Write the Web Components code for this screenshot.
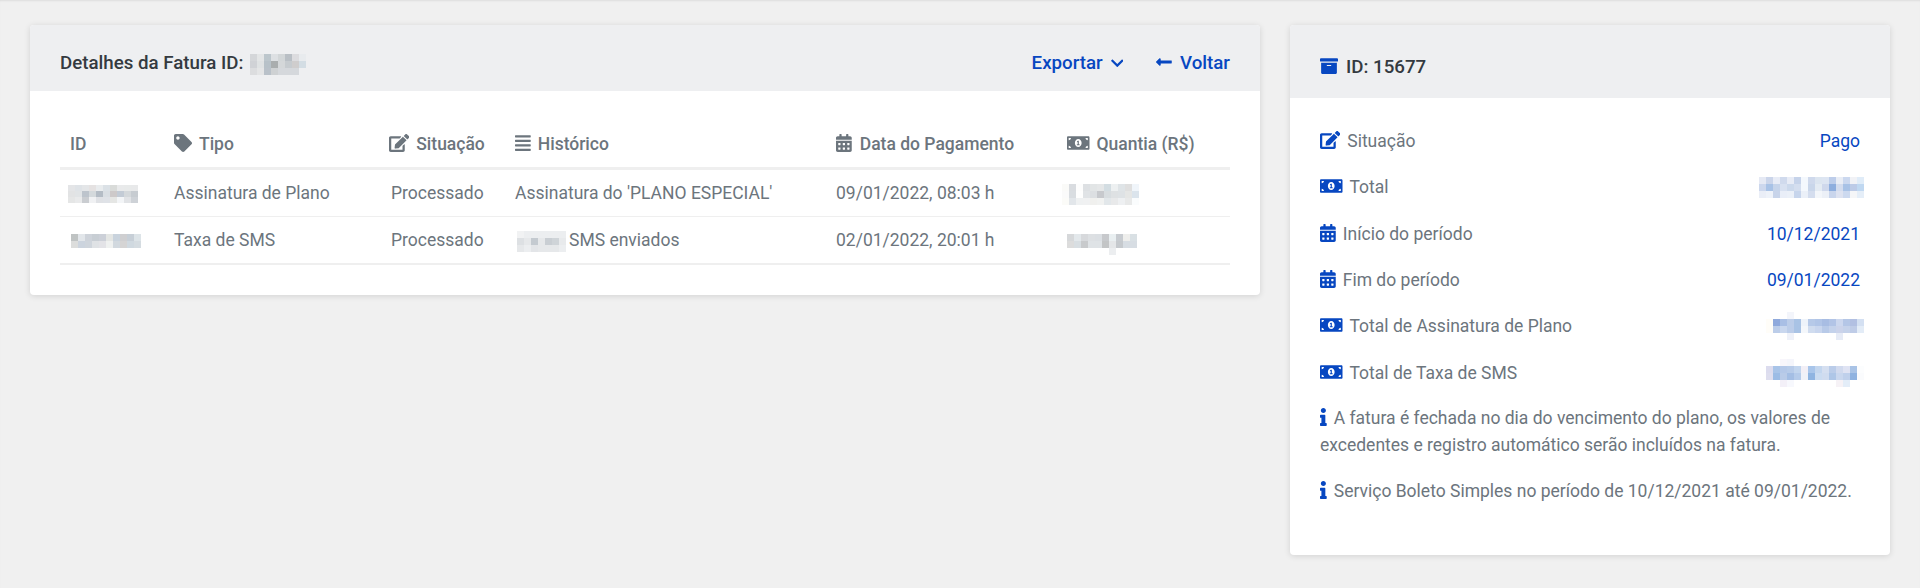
<!DOCTYPE html>
<html lang="pt-BR">
<head>
<meta charset="utf-8">
<title>Detalhes da Fatura</title>
<style>
html,body{margin:0;padding:0;background:#f0f0f0;height:100%;overflow:hidden;font-family:Roboto,"Liberation Sans",sans-serif;font-size:17.5px;color:#6c757d}
</style>
</head>
<body>
<invoice-page>
  <invoice-card slot="main">
    <span slot="title">Detalhes da Fatura ID: <blur-patch rh="7" style="margin-left:2px" colors="d4d6d9 e3e5e6 bcc6cc dde0e3 d2d6d8 b9bfc5 dcdcdf e8ebee|d0d2d6 dfe2e3 b7c1c8 a9adae d4d7d9 c6cbcf cfcdcd d3dde4|dcdddf e4e5e6 b9c1c9 ced1d3 d5d8dc d5d8dc d5d8dc eeeff1"></blur-patch></span>
    <div slot="actions" class="actions">
      <action-link label="Exportar" icon="chevron" after></action-link>
      <action-link label="Voltar" icon="arrow"></action-link>
    </div>
    <invoice-table></invoice-table>
  </invoice-card>
  <invoice-card slot="side" tall>
    <span slot="title"><fa-icon name="archive" color="#0747c1" gap="8"></fa-icon>ID: 15677</span>
    <invoice-summary></invoice-summary>
  </invoice-card>
</invoice-page>
<script>
const ICONS={
tag:[512,"M0 252.118V48C0 21.49 21.49 0 48 0h204.118a48 48 0 0 1 33.941 14.059l211.882 211.882c18.745 18.745 18.745 49.137 0 67.882L293.823 497.941c-18.745 18.745-49.137 18.745-67.882 0L14.059 286.059A48 48 0 0 1 0 252.118zM112 64c-26.51 0-48 21.49-48 48s21.49 48 48 48 48-21.49 48-48-21.49-48-48-48z"],
edit:[576,"M402.6 83.2l90.2 90.2c3.8 3.8 3.8 10 0 13.8L274.4 405.6l-92.8 10.3c-12.4 1.4-22.9-9.1-21.5-21.5l10.3-92.8L388.8 83.2c3.8-3.8 10-3.8 13.8 0zm162-22.9l-48.8-48.8c-15.2-15.2-39.9-15.2-55.2 0l-35.4 35.4c-3.8 3.8-3.8 10 0 13.8l90.2 90.2c3.8 3.8 10 3.8 13.8 0l35.4-35.4c15.2-15.3 15.2-40 0-55.2zM384 346.2V448H64V128h229.8c3.2 0 6.2-1.3 8.5-3.5l40-40c7.6-7.6 2.2-20.5-8.5-20.5H48C21.5 64 0 85.5 0 112v352c0 26.5 21.5 48 48 48h352c26.5 0 48-21.5 48-48V306.2c0-10.7-12.9-16-20.5-8.5l-40 40c-2.2 2.3-3.5 5.3-3.5 8.5z"],
justify:[448,"M432 416H16a16 16 0 0 0-16 16v32a16 16 0 0 0 16 16h416a16 16 0 0 0 16-16v-32a16 16 0 0 0-16-16zm0-128H16a16 16 0 0 0-16 16v32a16 16 0 0 0 16 16h416a16 16 0 0 0 16-16v-32a16 16 0 0 0-16-16zm0-128H16a16 16 0 0 0-16 16v32a16 16 0 0 0 16 16h416a16 16 0 0 0 16-16v-32a16 16 0 0 0-16-16zm0-128H16A16 16 0 0 0 0 48v32a16 16 0 0 0 16 16h416a16 16 0 0 0 16-16V48a16 16 0 0 0-16-16z"],
calendar:[448,"M0 464c0 26.5 21.5 48 48 48h352c26.5 0 48-21.5 48-48V192H0v272zm320-196c0-6.6 5.4-12 12-12h40c6.6 0 12 5.4 12 12v40c0 6.6-5.4 12-12 12h-40c-6.6 0-12-5.4-12-12v-40zm0 128c0-6.6 5.4-12 12-12h40c6.6 0 12 5.4 12 12v40c0 6.6-5.4 12-12 12h-40c-6.6 0-12-5.4-12-12v-40zM192 268c0-6.6 5.4-12 12-12h40c6.6 0 12 5.4 12 12v40c0 6.6-5.4 12-12 12h-40c-6.6 0-12-5.4-12-12v-40zm0 128c0-6.6 5.4-12 12-12h40c6.6 0 12 5.4 12 12v40c0 6.6-5.4 12-12 12h-40c-6.6 0-12-5.4-12-12v-40zM64 268c0-6.6 5.4-12 12-12h40c6.6 0 12 5.4 12 12v40c0 6.6-5.4 12-12 12H76c-6.6 0-12-5.4-12-12v-40zm0 128c0-6.6 5.4-12 12-12h40c6.6 0 12 5.4 12 12v40c0 6.6-5.4 12-12 12H76c-6.6 0-12-5.4-12-12v-40zM400 64h-48V16c0-8.8-7.2-16-16-16h-32c-8.8 0-16 7.2-16 16v48H160V16c0-8.8-7.2-16-16-16h-32c-8.8 0-16 7.2-16 16v48H48C21.5 64 0 85.5 0 112v48h448v-48c0-26.5-21.5-48-48-48z"],
money:[640,"M352 288h-16v-88c0-4.42-3.58-8-8-8h-13.58c-4.74 0-9.37 1.4-13.31 4.03l-15.33 10.22a7.994 7.994 0 0 0-2.22 11.09l8.88 13.31a7.994 7.994 0 0 0 11.09 2.22l.47-.31V288h-16c-4.42 0-8 3.58-8 8v16c0 4.42 3.58 8 8 8h64c4.42 0 8-3.58 8-8v-16c0-4.42-3.58-8-8-8zM608 64H32C14.33 64 0 78.33 0 96v320c0 17.67 14.33 32 32 32h576c17.67 0 32-14.33 32-32V96c0-17.67-14.33-32-32-32zM48 400v-64c35.35 0 64 28.65 64 64H48zm0-224v-64h64c0 35.35-28.65 64-64 64zm272 192c-53.02 0-96-50.15-96-112 0-61.86 42.98-112 96-112s96 50.14 96 112c0 61.87-43 112-96 112zm272 32h-64c0-35.35 28.65-64 64-64v64zm0-224c-35.35 0-64-28.65-64-64h64v64z"],
archive:[512,"M32 448c0 17.7 14.3 32 32 32h384c17.7 0 32-14.3 32-32V160H32v288zm160-212c0-6.6 5.4-12 12-12h104c6.6 0 12 5.4 12 12v8c0 6.6-5.4 12-12 12H204c-6.6 0-12-5.4-12-12v-8zM480 32H32C14.3 32 0 46.3 0 64v48c0 8.8 7.2 16 16 16h480c8.8 0 16-7.2 16-16V64c0-17.7-14.3-32-32-32z"],
info:[192,"M20 424.229h20V279.771H20c-11.046 0-20-8.954-20-20V212c0-11.046 8.954-20 20-20h112c11.046 0 20 8.954 20 20v212.229h20c11.046 0 20 8.954 20 20V492c0 11.046-8.954 20-20 20H20c-11.046 0-20-8.954-20-20v-47.771c0-11.046 8.954-20 20-20zM96 0C56.235 0 24 32.235 24 72s32.235 72 72 72 72-32.235 72-72S135.764 0 96 0z"],
chevron:[448,"M207.029 381.476L12.686 187.132c-9.373-9.373-9.373-24.569 0-33.941l22.667-22.667c9.357-9.357 24.522-9.375 33.901-.04L224 284.505l154.745-154.021c9.379-9.335 24.544-9.317 33.901.04l22.667 22.667c9.373 9.373 9.373 24.569 0 33.941L240.971 381.476c-9.373 9.372-24.569 9.372-33.942 0z"],
arrow:[448,"M134.059 296H436c6.627 0 12-5.373 12-12v-56c0-6.627-5.373-12-12-12H134.059v-46.059c0-21.382-25.851-32.09-40.971-16.971L7.029 239.029c-9.373 9.373-9.373 24.569 0 33.941l86.059 86.059c15.119 15.119 40.971 4.411 40.971-16.971V296z"]
};
class Base extends HTMLElement{
  render(html){this.attachShadow({mode:'open'}).innerHTML=html;}
}
class FaIcon extends Base{
  connectedCallback(){
    if(this.shadowRoot)return;
    const n=ICONS[this.getAttribute('name')];
    const s=+this.getAttribute('size')||18,c=this.getAttribute('color')||'currentColor',g=this.getAttribute('gap')||0;
    const w=n[0]/512*s;
    this.render(`<style>:host{display:inline-block;vertical-align:-2px;line-height:0;margin-right:${g}px}svg{display:block;fill:${c}}</style><svg width="${w}" height="${s}" viewBox="0 0 ${n[0]} 512" aria-hidden="true"><path d="${n[1]}"/></svg>`);
  }
}
customElements.define('fa-icon',FaIcon);
class BlurPatch extends Base{
  connectedCallback(){
    if(this.shadowRoot)return;
    const rows=this.getAttribute('colors').split('|').map(r=>r.trim().split(/\s+/));
    const rh=+this.getAttribute('rh')||7,w=+this.getAttribute('cw')||7;
    const cols=Math.max(...rows.map(r=>r.length));
    const cells=rows.map(r=>r.map(c=>`<i style="background:${c==='0'?'transparent':'#'+c}"></i>`).join('')).join('');
    const half=(rows.length*rh-2)/2;
    this.render(`<style>:host{display:inline-grid;vertical-align:middle;margin-top:${-half}px;margin-bottom:${-half}px;grid-template-columns:repeat(${cols},${w}px);grid-auto-rows:${rh}px}i{display:block}</style>${cells}`);
  }
}
customElements.define('blur-patch',BlurPatch);
class ActionLink extends Base{
  connectedCallback(){
    if(this.shadowRoot)return;
    const l=this.getAttribute('label'),i=this.getAttribute('icon');
    const after=this.hasAttribute('after');
    const ic=after?`<fa-icon name="${i}" size="14.4" style="margin-left:8px;vertical-align:-1px"></fa-icon>`:`<fa-icon name="${i}" size="18" gap="8"></fa-icon>`;
    this.render(`<style>:host{display:inline-block;color:#0747c1;font-weight:500;font-size:18.72px;line-height:24px;white-space:nowrap}</style>${after?l+ic:ic+l}`);
  }
}
customElements.define('action-link',ActionLink);
class InvoiceCard extends Base{
  connectedCallback(){
    if(this.shadowRoot)return;
    const tall=this.hasAttribute('tall');
    this.render(`<style>
      :host{display:block;background:#fff;border-radius:4px;box-shadow:0 1px 6px rgba(0,0,0,.13);overflow:hidden}
      header{background:#eeeff1;display:flex;justify-content:space-between;align-items:flex-start;height:${tall?73:66}px;box-sizing:border-box;padding:${tall?30:26}px 30px 0;font-weight:500;color:#343a40;font-size:18.72px;line-height:24px}
      ::slotted(.actions){display:flex;gap:33px}
    </style><header><slot name="title"></slot><slot name="actions"></slot></header><slot></slot>`);
  }
}
customElements.define('invoice-card',InvoiceCard);
class InvoicePage extends Base{
  connectedCallback(){
    if(this.shadowRoot)return;
    this.render(`<style>
      :host{display:block;position:relative;height:588px;box-shadow:inset 0 2px 2px -1px rgba(0,0,0,.08)}
      .grid{display:flex;gap:30px;align-items:flex-start;padding:25px 30px 0}
      .m{flex:1;min-width:0}.s{width:600px;flex:none}
    </style><div class="grid"><div class="m"><slot name="main"></slot></div><div class="s"><slot name="side"></slot></div></div>`);
  }
}
customElements.define('invoice-page',InvoicePage);
class InvoiceTable extends Base{
  connectedCallback(){
    if(this.shadowRoot)return;
    const th=(i,t,g=7)=>`<th>${i?`<fa-icon name="${i}" gap="${g}"></fa-icon>`:''}${t}</th>`;
    this.render(`<style>
      :host{display:block;padding:30px}
      table{width:100%;border-collapse:collapse;table-layout:fixed;font-size:17.5px;color:#6c757d}
      th{font-weight:500;text-align:left;padding:0 10px;height:46px;border-bottom:3px solid #efefef;white-space:nowrap;box-sizing:content-box}
      td{padding:0 10px;height:46px;border-bottom:1px solid #efefef;white-space:nowrap}
      tr:last-child td{border-bottom-width:2px}
      .ic{padding-left:12px}
    </style>
    <table><colgroup><col style="width:104px"><col style="width:215px"><col style="width:126px"><col style="width:321px"><col style="width:231px"><col style="width:173px"></colgroup>
    <thead><tr>${th('', 'ID')}${th('tag','Tipo')}${th('edit','Situação')}${th('justify','Histórico')}${th('calendar','Data do Pagamento',8)}${th('money','Quantia (R$)')}</tr></thead>
    <tbody>
    <tr><td><blur-patch rh="6" style="margin-left:-2px" colors="e4e5e7 dfe3e7 e4e6e8 e5e2e2 e9ecee dbe1e6 d9dbd9 e9eaeb e8eaea e8e9ea|e2e3e4 e1e4e6 bdc4cc d4d9dc b4bcc5 d9dee3 cdc9c9 c3cbd5 d4d8db c7ccd1|e5e6e6 e9eaeb cacdd1 f0f1f3 dfe1e5 dfe2e7 e5e6e4 f3f5f7 e1e3e6 ced2d7"></blur-patch></td><td>Assinatura de Plano</td><td class="ic">Processado</td><td>Assinatura do 'PLANO ESPECIAL'</td><td>09/01/2022, 08:03 h</td><td><blur-patch style="margin-left:-5px" colors="fafaf8 d9dce0 fdfdfd dde0e3 e2e5e6 e5e7e8 d3dde2 edf0f1 dfe4e7 dfdfdf f0f5fa|fafafa d9dde1 fefefe e0e3e6 dcdfe2 c7c9cd d8dde0 dee1e3 dee2e5 e5e6e5 dbe4ec|fbfbf8 e2e6ea eff1f2 f0f1f2 f0f0ee f1f2f1 e2e7ea e8e9ea eef0f2 e8e9e9 fafcfd"></blur-patch></td></tr>
    <tr><td><blur-patch style="margin-left:1px" colors="bfc3c3 e2e6ea ced3da c8ced4 ccd0d8 e4e6e4 c9d3dd cfcfd1 c7cfd7 dde4e8|dcdddc ccd4de cfd5dc dfe2e5 e3e3e7 eff1f0 d2d9df d5d4d4 d0d9e0 d5dce1"></blur-patch></td><td>Taxa de SMS</td><td class="ic">Processado</td><td><blur-patch rh="7" style="margin-left:2px;margin-right:3px" colors="f1f2f3 eceef0 eceef0 eceef0 eceef0 eceef0 eceef0|dde0e3 e6e8ea c4cad0 e6e8ea c9ced3 cfd4d8 e8eaec|e6e8ea eceef0 e3e5e8 e6e8ea e6e8ea e6e8ea eceef0"></blur-patch>SMS enviados</td><td>02/01/2022, 20:01 h</td><td><blur-patch colors="0 0 0 0 0 0 0 0 0 0|d6d8da e3e8eb d7d9dc dde0e3 dbdfe3 c7c9cc e9eff1 c7cbd0 eeeeec d9e0e4|dcdcdc d8dee2 c8cacc dfe3e6 dfe3e6 c3c5c6 e4e6e8 c5c9cd d7dde3 d7dde3|0 0 0 0 0 0 eceef0 0 0 0"></blur-patch></td></tr>
    </tbody></table>`);
  }
}
customElements.define('invoice-table',InvoiceTable);
class SummaryRow extends Base{
  connectedCallback(){
    if(this.shadowRoot)return;
    const i=this.getAttribute('icon'),l=this.getAttribute('label');
    this.render(`<style>
      :host{display:flex;justify-content:space-between;align-items:center;height:46.33px;font-size:17.5px;color:#6c757d}
      .v{color:#0747c1;display:flex;align-items:center;height:24px}
    </style><span><fa-icon name="${i}" color="#0747c1" gap="7"></fa-icon>${l}</span><span class="v"><slot></slot></span>`);
  }
}
customElements.define('summary-row',SummaryRow);
class InvoiceSummary extends Base{
  connectedCallback(){
    if(this.shadowRoot)return;
    this.render(`<style>
      :host{display:block;padding:20px 30px 50.5px}
      blur-patch{margin-right:-4px}
      p{margin:0;font-size:17.5px;line-height:26.67px;color:#6c757d}
      p.a{margin-top:9px;margin-bottom:19.4px}
    </style>
    <summary-row icon="edit" label="Situação">Pago</summary-row>
    <summary-row icon="money" label="Total"><blur-patch colors="e5e9f4 cbd5ea e8ecf6 d0daed e8ecf6 c6d3ea f4f8fd cfd9ec dce5f0 dde5f2 bdcdea e9edf5 cbd8ef f1f2f6 e0ecf8|ccd7ed a8c2e6 c6d4ea d8e1f1 ccd9ec d4deef f4f8fd c9d6ea e4ebf3 cfd8ec 8eaede d3dcee a8c2e6 bdcbe7 c0d8f1|eaeef7 eef2f9 c8d4ea e9eef8 ebf0f8 c7d5ec ebf0f8 d4ddee f3f6fa ecf0f7 c9d5ec dde2f0 ccd9ef f5f6f8 e5eef8"></blur-patch></summary-row>
    <summary-row icon="calendar" label="Início do período">10/12/2021</summary-row>
    <summary-row icon="calendar" label="Fim do período">09/01/2022</summary-row>
    <summary-row icon="money" label="Total de Assinatura de Plano"><blur-patch colors="0 0 0 f3f5fb 0 0 0 0 0 0 0 0 0 0|fffdf8 8fa9dc a9bfe5 bccde9 a9c3e5 eef3fa b6c9e8 b1c5e7 a8bde3 b2c4e6 ccd7ee b4c6e6 b2c0e2 d4e0f2|fffdf8 bccde9 c9d7ee bccde9 a9c3e5 f4f7fb d0dcef c9d6ee b8cae8 c4d2eb cbd3ea c5d2ea bfcce7 e3ecf7|0 0 0 eef1f9 0 0 0 0 0 0 e6ebf6 0 0 0"></blur-patch></summary-row>
    <summary-row icon="money" label="Total de Taxa de SMS"><blur-patch colors="0 0 f8f6fb f4f5fb 0 0 0 0 0 0 0 0 0 0|dcdcee a8c4e8 b4c8e8 b7cbe9 c2d5ee f2eff6 a8c5ea c3d6ee d5dff0 bacce9 d1daee dfe3f3 a9c3e6 fcfdfe|dedeee 9cbce5 b9cbe8 a4bee4 b5cbea eff1f8 8fb4e1 cbdcf1 d0dcef aec6e7 c9d7ee bfd0eb 8fb2e0 fafbfd|0 0 f3f0f8 f7f8fd 0 0 0 0 0 0 f6f2f6 e3edf8 0 0"></blur-patch></summary-row>
    <p class="a"><fa-icon name="info" color="#0747c1" gap="7"></fa-icon>A fatura é fechada no dia do vencimento do plano, os valores de excedentes e registro automático serão incluídos na fatura.</p>
    <p><fa-icon name="info" color="#0747c1" gap="7"></fa-icon>Serviço Boleto Simples no período de 10/12/2021 até 09/01/2022.</p>`);
  }
}
customElements.define('invoice-summary',InvoiceSummary);
</script>
</body>
</html>
